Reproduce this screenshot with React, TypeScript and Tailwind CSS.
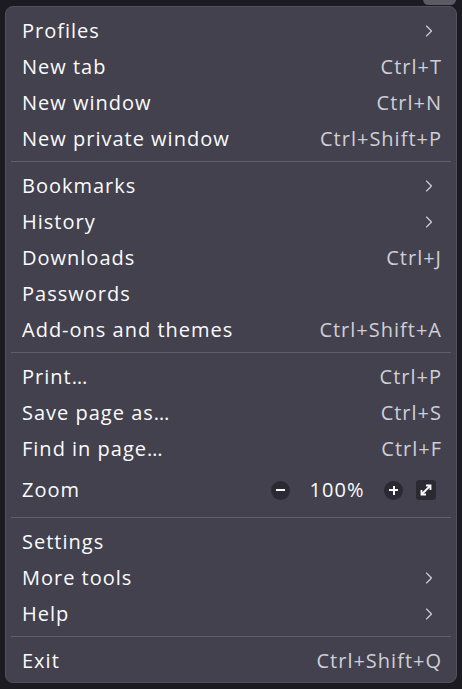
import { ChevronRight } from "lucide-react";

type Item = { label: string; shortcut?: string; sub?: boolean };

const groups: Item[][] = [
  [
    { label: "Profiles", sub: true },
    { label: "New tab", shortcut: "Ctrl+T" },
    { label: "New window", shortcut: "Ctrl+N" },
    { label: "New private window", shortcut: "Ctrl+Shift+P" },
  ],
  [
    { label: "Bookmarks", sub: true },
    { label: "History", sub: true },
    { label: "Downloads", shortcut: "Ctrl+J" },
    { label: "Passwords" },
    { label: "Add-ons and themes", shortcut: "Ctrl+Shift+A" },
  ],
  [
    { label: "Print…", shortcut: "Ctrl+P" },
    { label: "Save page as…", shortcut: "Ctrl+S" },
    { label: "Find in page…", shortcut: "Ctrl+F" },
  ],
  [
    { label: "Settings" },
    { label: "More tools", sub: true },
    { label: "Help", sub: true },
  ],
  [{ label: "Exit", shortcut: "Ctrl+Shift+Q" }],
];

function Row({ item }: { item: Item }) {
  return (
    <div className="flex h-9 items-center justify-between pl-[11px] pr-[9px]">
      <span className="text-[#fbfbfe]">{item.label}</span>
      {item.shortcut && <span className="text-[#cfcfd8]">{item.shortcut}</span>}
      {item.sub && (
        <ChevronRight className="mr-[3px] text-[#cfcfd8]" size={20} strokeWidth={1.4} />
      )}
    </div>
  );
}

function ZoomRow() {
  return (
    <div className="flex h-[46px] items-center justify-between pl-[11px] pr-[15px]">
      <span className="text-[#fbfbfe]">Zoom</span>
      <div className="flex items-center">
        <div className="flex h-[19px] w-[19px] items-center justify-center rounded-full bg-[#2b2a33]">
          <div className="h-[2px] w-[9px] bg-[#fbfbfe]" />
        </div>
        <span className="w-[94px] text-center text-[#fbfbfe]">100%</span>
        <div className="relative flex h-[19px] w-[19px] items-center justify-center rounded-full bg-[#2b2a33]">
          <div className="h-[2px] w-[9px] bg-[#fbfbfe]" />
          <div className="absolute h-[9px] w-[2px] bg-[#fbfbfe]" />
        </div>
        <div className="ml-[13px] flex h-[20px] w-[20px] items-center justify-center rounded-[3px] bg-[#2b2a33]">
          <svg width="14" height="14" viewBox="0 0 14 14" fill="none">
            <path d="M3 11 L11 3" stroke="#fbfbfe" strokeWidth="1.8" />
            <path d="M7 2.5 H11.5 V7" stroke="#fbfbfe" strokeWidth="1.8" fill="none" />
            <path d="M2.5 7 V11.5 H7" stroke="#fbfbfe" strokeWidth="1.8" fill="none" />
          </svg>
        </div>
      </div>
    </div>
  );
}

function Separator() {
  return <div className="mb-[6px] mt-[4px] h-px bg-[#5f5e69]" />;
}

export default function App() {
  return (
    <div
      className="relative h-[689px] w-[462px] overflow-hidden bg-[#1c1b22] px-[5px] pt-[6px] text-[20px] tracking-[1px]"
      style={{ fontFamily: '"Open Sans", "DejaVu Sans", sans-serif' }}
    >
      <div className="absolute right-[6px] top-[-6px] h-[11px] w-[33px] rounded-md bg-[#5b5a65]" />
      <div className="relative h-[677px] w-[452px] rounded-lg border border-[#52515c] bg-[#42414d] px-[5px] pt-[6px]">
        {groups.map((g, gi) => (
          <div key={gi}>
            {gi > 0 && <Separator />}
            {g.map((it) => (
              <Row key={it.label} item={it} />
            ))}
            {gi === 2 && <ZoomRow />}
          </div>
        ))}
      </div>
    </div>
  );
}
